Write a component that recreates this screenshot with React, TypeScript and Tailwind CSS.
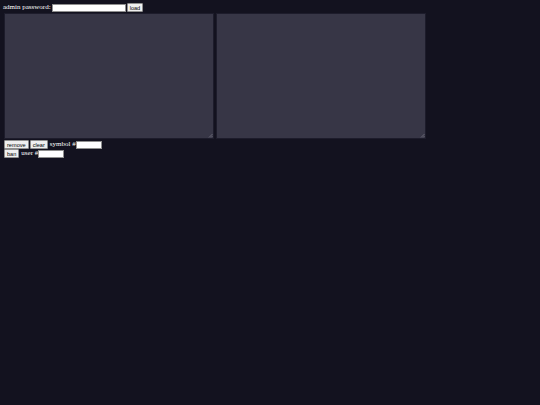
export default function App() {
  const btn =
    "h-[9px] px-[2px] bg-[#efefef] text-black text-[5.6px] leading-[6px] border border-[#8f8f8f] rounded-[1px] flex items-center font-[Liberation_Sans,Arial,sans-serif]"
  const inp = "h-[8px] bg-white border border-[#8f8f8f]"

  return (
    <div className="w-[540px] h-[405px] bg-[#13121f] text-white text-[7px] leading-[9px] pt-[3px] px-[4px] font-[Liberation_Serif,serif]">
      {/* admin row */}
      <div className="flex items-center gap-[1px] h-[9px] -ml-[1px]">
        <span>admin password:</span>
        <div className={`${inp} w-[74px]`} />
        <button className={btn}>load</button>
      </div>

      {/* editors */}
      <div className="flex gap-[2px] mt-[1px]">
        <div className="relative w-[210px] h-[126px] bg-[#373646] border border-[#1d1c2b]">
          <ResizeHandle />
        </div>
        <div className="relative w-[210px] h-[126px] bg-[#373646] border border-[#1d1c2b]">
          <ResizeHandle />
        </div>
      </div>

      {/* symbol row */}
      <div className="flex items-center gap-[1px] mt-[1px] h-[9px]">
        <button className={btn}>remove</button>
        <button className={btn}>clear</button>
        <span className="ml-[1px]">symbol #</span>
        <div className={`${inp} w-[26px] -ml-[1px]`} />
      </div>

      {/* user row */}
      <div className="flex items-center gap-[1px] h-[9px]">
        <button className={btn}>ban</button>
        <span className="ml-[1px]">user #</span>
        <div className={`${inp} w-[26px] -ml-[1px]`} />
      </div>
    </div>
  )
}

function ResizeHandle() {
  return (
    <svg className="absolute right-0 bottom-0 w-[5px] h-[5px]" viewBox="0 0 5 5">
      <path d="M4.5 1 L1 4.5 M4.5 3 L3 4.5" stroke="#8a8996" strokeWidth="0.6" />
    </svg>
  )
}
